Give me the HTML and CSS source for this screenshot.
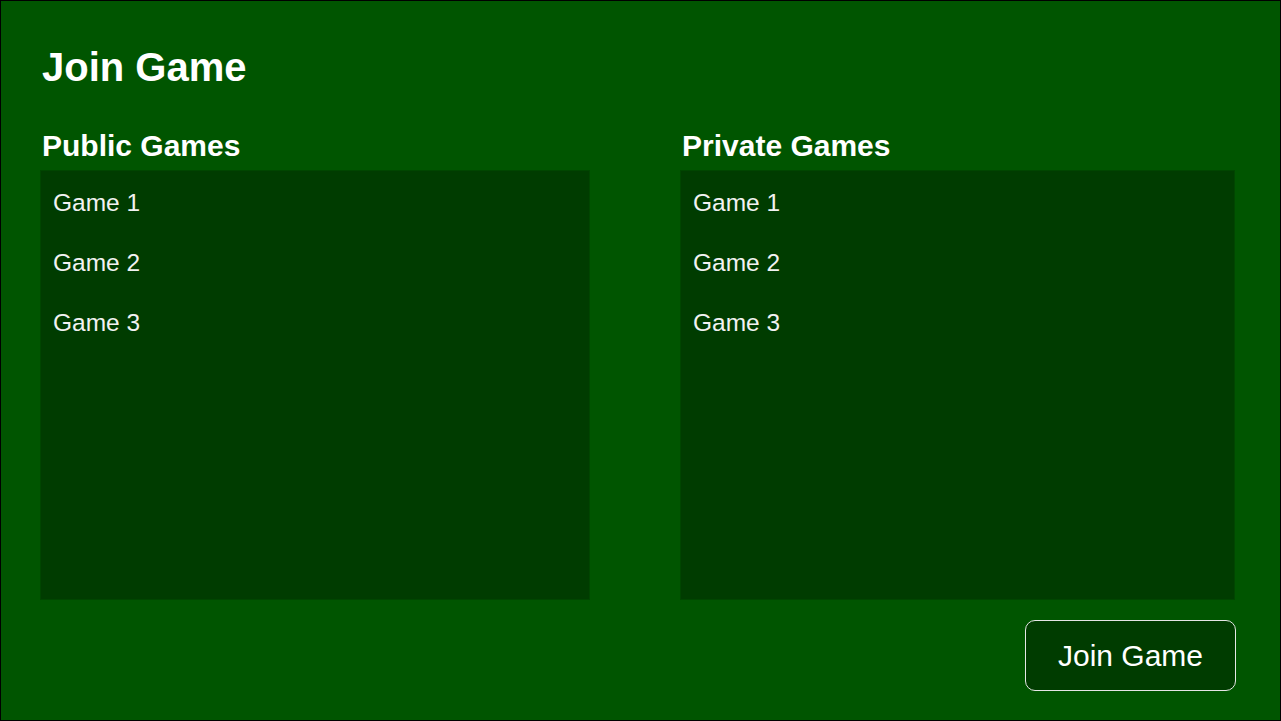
FILE: index.html
```html
<!DOCTYPE html>
<html lang="en">
<head>
<meta charset="utf-8">
<title>Join Game</title>
<link rel="stylesheet" href="styles.css">
</head>
<body>
<div class="frame">
  <h1 class="title">Join Game</h1>
  <div class="columns">
    <section class="col col-public">
      <h2 class="col-title">Public Games</h2>
      <ul class="game-list">
        <li class="game-item">Game 1</li>
        <li class="game-item">Game 2</li>
        <li class="game-item">Game 3</li>
      </ul>
    </section>
    <section class="col col-private">
      <h2 class="col-title">Private Games</h2>
      <ul class="game-list">
        <li class="game-item">Game 1</li>
        <li class="game-item">Game 2</li>
        <li class="game-item">Game 3</li>
      </ul>
    </section>
  </div>
  <div class="actions">
    <button class="join-btn">Join Game</button>
  </div>
</div>
</body>
</html>
```
FILE: styles.css
```css
* { box-sizing: border-box; }
html, body { margin: 0; padding: 0; }
body {
  font-family: "Liberation Sans", Arial, sans-serif;
  color: #ffffff;
  background: #005500;
}
.frame {
  width: 1281px;
  height: 721px;
  border: 1px solid #000000;
  background: #005500;
  padding: 43px 44px 0 39px;
}
.title {
  margin: 0;
  padding-left: 2px;
  font-size: 40px;
  line-height: 46px;
  font-weight: bold;
}
.columns {
  margin-top: 39px;
  display: grid;
  grid-template-columns: 550px 555px;
  column-gap: 90px;
}
.col-title {
  margin: 0 0 7px 0;
  padding-left: 2px;
  font-size: 30px;
  line-height: 34px;
  font-weight: bold;
}
.game-list {
  list-style: none;
  margin: 0;
  padding: 2px 0 0 0;
  height: 430px;
  background: #003c00;
  border: 1px solid #004600;
}
.game-item {
  padding: 16px 12px;
  font-size: 24.5px;
  line-height: 28px;
  color: #f2f2f2;
}
.actions {
  margin-top: 20px;
  display: flex;
  justify-content: flex-end;
}
.join-btn {
  width: 211px;
  height: 71px;
  background: #003c00;
  color: #ffffff;
  border: 1px solid #e6e6e6;
  border-radius: 10px;
  font-family: "Liberation Sans", Arial, sans-serif;
  font-size: 30px;
  padding: 0;
  display: flex;
  align-items: center;
  justify-content: center;
}
```
